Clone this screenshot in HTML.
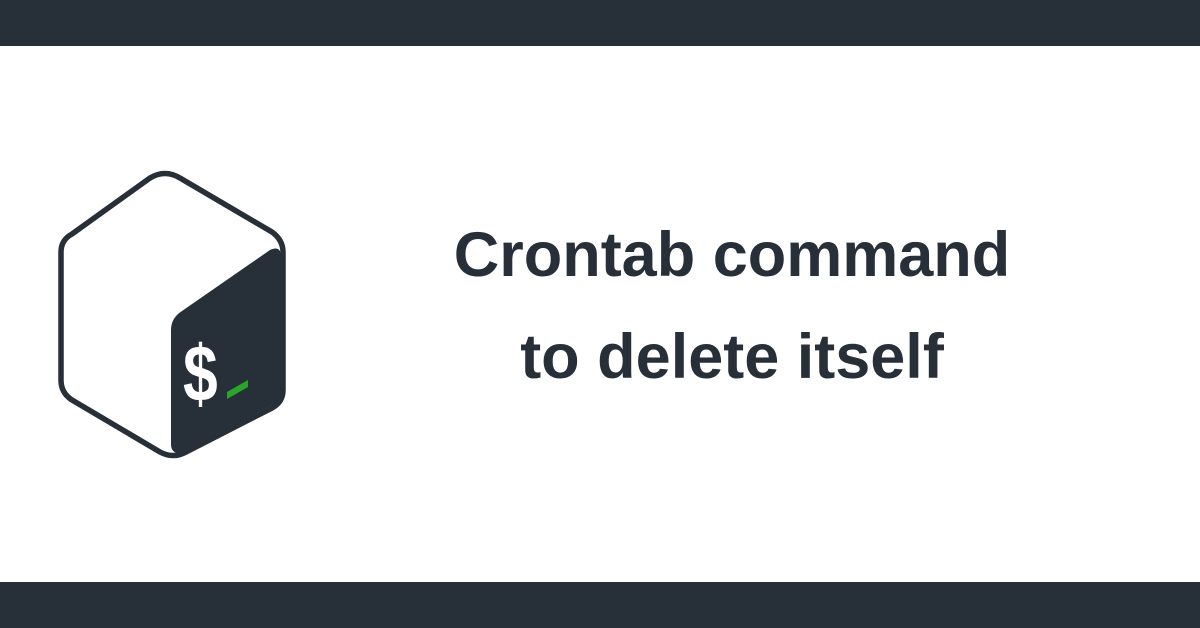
<!DOCTYPE html>
<html><head><style>
html,body{margin:0;padding:0;}
body{width:1200px;height:628px;background:#fff;position:relative;overflow:hidden;font-family:"Liberation Sans",sans-serif;}
.bar{position:absolute;left:0;width:1200px;background:#272f38;}
.t{position:absolute;left:382px;width:700px;text-align:center;font-weight:bold;font-size:63px;color:#272f38;line-height:63px;}
</style></head><body>
<div class="bar" style="top:0;height:46px"></div>
<div class="bar" style="top:582px;height:46px"></div>
<svg style="position:absolute;left:0;top:0" width="400" height="628" viewBox="0 0 400 628">
<path d="M150 178 Q165 169 180 178 L272 232 Q283 240 283 252 L283 390 Q283 402 272 408 L186 452 Q173 459 160 452 L72 400 Q61 393 61 380 L61 252 Q61 240 72 234 Z" fill="#fff" stroke="#272f38" stroke-width="5.5" stroke-linejoin="round"/>
<path d="M270 250 Q281 245 281 257 L281 392 Q281 400 272 405 L186 450 Q172 457 171 445 L171 330 Q171 318 182 311 Z" fill="#272f38"/>
<g transform="translate(183 401) scale(0.78 1)"><text x="0" y="0" font-family="Liberation Sans" font-weight="bold" font-size="80" fill="#fff">$</text></g>
<path d="M227 392 L248 380 L248 387 L227 399 Z" fill="#2aa52a"/>
</svg>
<div class="t" style="top:224px">Crontab command</div>
<div class="t" style="top:326px">to delete itself</div>
</body></html>
